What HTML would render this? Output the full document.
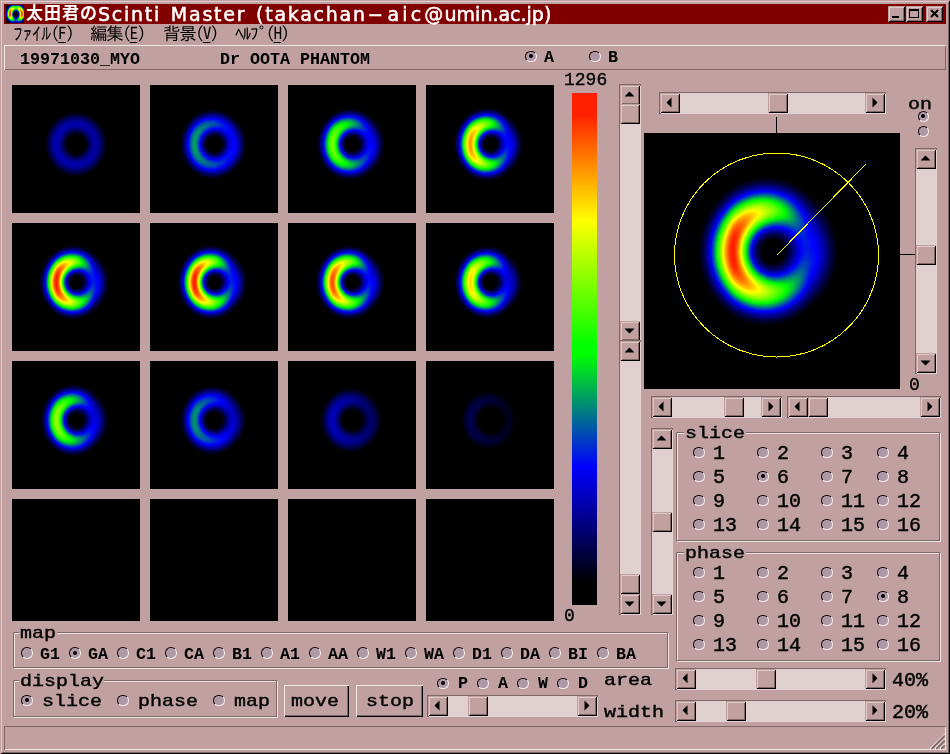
<!DOCTYPE html><html><head><meta charset="utf-8"><title>Scinti Master</title><style>
*{box-sizing:border-box;margin:0;padding:0}
html,body{width:950px;height:754px;overflow:hidden;background:#c0a0a0}
body{position:relative;font-family:"Liberation Mono",monospace;color:#000}
.a{position:absolute}
.t16{position:absolute;font:bold 16.67px/20px "Liberation Mono",monospace;white-space:pre}
.t20{position:absolute;height:24px;font:20px/24px "Liberation Mono",monospace;white-space:pre;-webkit-text-stroke:0.4px #000}
.lc{transform:scaleY(.8);transform-origin:0 100%;-webkit-text-stroke:0.45px #000}
.t18{position:absolute;font:18px/22px "Liberation Mono",monospace;white-space:pre;-webkit-text-stroke:0.35px #000}
.btn{position:absolute;background:#c0a0a0;box-shadow:inset 1px 1px 0 #c0a0a0,inset -1px -1px 0 #000,inset 2px 2px 0 #dec8c8,inset -2px -2px 0 #806868}
.pb{position:absolute;background:#c0a0a0;box-shadow:inset 1px 1px 0 #efe3e3,inset -1px -1px 0 #000,inset -2px -2px 0 #806868}
.sb{position:absolute;background:#e0d0d0;box-shadow:-1px -1px 0 #806868,1px 1px 0 #e4d4d4,-1px 1px 0 #806868,1px -1px 0 #806868}
.grp{position:absolute;border:1px solid #806868;box-shadow:1px 1px 0 #efe3e3,inset 1px 1px 0 #efe3e3}
.cut{position:absolute;background:#c0a0a0;height:3px}
.rd{position:absolute;width:11.6px;height:11.6px;border-radius:50%;background:#b098a8;border:1.3px solid;border-color:#100808 #f4ecec #f4ecec #100808}
.rd.on::after{content:"";position:absolute;left:2.5px;top:2.5px;width:4px;height:4px;border-radius:50%;background:#000}
.rs{width:11px;height:11px}
.rs.on::after{left:2.3px;top:2.3px}
.menu{position:absolute;top:23.5px;font:17.5px/19px "IPAGothic","Noto Sans CJK JP",sans-serif;white-space:pre;letter-spacing:-1.3px}
.menu u{text-underline-offset:2px}
.nar{display:inline-block;transform:scaleX(0.58);transform-origin:0 50%;-webkit-text-stroke:0.3px #000}
</style></head><body><div id="w" style="position:absolute;left:0;top:0;width:950px;height:754px;will-change:transform">
<div class="a" style="left:0px;top:0px;width:950px;height:754px;box-shadow:inset 1px 1px 0 #c0a0a0,inset -1px -1px 0 #000,inset 2px 2px 0 #e0cccc,inset -2px -2px 0 #806868"></div>
<div class="a" style="left:4px;top:4px;width:942px;height:20px;background:#800000"></div>
<div class="a" id="title" style="left:26px;top:3px;height:21px;color:#fff;font:19px/21px 'DejaVu Sans','Noto Sans CJK JP',sans-serif;white-space:pre;letter-spacing:1.75px;word-spacing:2px;-webkit-text-stroke:0.5px #fff"><span style="font:bold 17px/21px 'Noto Sans CJK JP',sans-serif;letter-spacing:1px;-webkit-text-stroke:0;position:relative;top:-2px">太田君の</span>Scinti Master (takachan<span style="display:inline-block;transform:scaleX(2.2);margin:0 6px">-</span><span style="letter-spacing:3.2px">aic@</span><span style="letter-spacing:0;margin-left:-2px">umin.ac.jp)</span></div>
<div class="btn" style="left:888px;top:6px;width:17px;height:16px;"></div>
<div class="a" style="left:892px;top:16px;width:7px;height:2px;background:#000"></div>
<div class="btn" style="left:906px;top:6px;width:17px;height:16px;"></div>
<div class="a" style="left:909px;top:9px;width:10px;height:9px;border:1px solid #000;border-top-width:2px"></div>
<div class="btn" style="left:926px;top:6px;width:17px;height:16px;"></div>
<svg class="a" style="left:930px;top:9px" width="9" height="9" viewBox="0 0 9 9"><path d="M1 1L8 8M8 1L1 8" stroke="#000" stroke-width="2"/></svg>
<div class="menu" style="left:13px"><span class="nar">ファイル</span><span style="margin-left:-27px">(<u>F</u>)</span></div>
<div class="menu" style="left:90px">編集(<u>E</u>)</div>
<div class="menu" style="left:163px">背景(<u>V</u>)</div>
<div class="menu" style="left:235px">ﾍﾙﾌﾟ(<u>H</u>)</div>
<div class="a" style="left:4px;top:45px;width:942px;height:25px;box-shadow:inset 1px 1px 0 #efe3e3,inset -1px -1px 0 #806868"></div>
<div class="t16" style="left:20px;top:50.0px">19971030_MYO</div>
<div class="t16" style="left:220px;top:50.0px">Dr OOTA PHANTOM</div>
<div class="rd on" style="left:525.2px;top:50.900000000000006px"></div>
<div class="rd" style="left:589.2px;top:50.900000000000006px"></div>
<div class="t16" style="left:544px;top:47.5px">A</div>
<div class="t16" style="left:608px;top:47.5px">B</div>
<svg class="a" style="left:0;top:0" width="950" height="754" viewBox="0 0 950 754"><defs><radialGradient id="rg" gradientUnits="userSpaceOnUse" cx="0" cy="0" r="100" gradientTransform="translate(128 118.5) scale(1 1.04)"><stop offset="0.00" stop-color="rgb(1,1,1)"/><stop offset="0.02" stop-color="rgb(2,2,2)"/><stop offset="0.04" stop-color="rgb(4,4,4)"/><stop offset="0.06" stop-color="rgb(7,7,7)"/><stop offset="0.08" stop-color="rgb(10,10,10)"/><stop offset="0.10" stop-color="rgb(15,15,15)"/><stop offset="0.12" stop-color="rgb(22,22,22)"/><stop offset="0.14" stop-color="rgb(32,32,32)"/><stop offset="0.16" stop-color="rgb(44,44,44)"/><stop offset="0.18" stop-color="rgb(59,59,59)"/><stop offset="0.20" stop-color="rgb(78,78,78)"/><stop offset="0.22" stop-color="rgb(99,99,99)"/><stop offset="0.24" stop-color="rgb(123,123,123)"/><stop offset="0.26" stop-color="rgb(148,148,148)"/><stop offset="0.28" stop-color="rgb(174,174,174)"/><stop offset="0.30" stop-color="rgb(198,198,198)"/><stop offset="0.32" stop-color="rgb(220,220,220)"/><stop offset="0.34" stop-color="rgb(238,238,238)"/><stop offset="0.36" stop-color="rgb(250,250,250)"/><stop offset="0.38" stop-color="rgb(255,255,255)"/><stop offset="0.40" stop-color="rgb(254,254,254)"/><stop offset="0.42" stop-color="rgb(247,247,247)"/><stop offset="0.44" stop-color="rgb(237,237,237)"/><stop offset="0.46" stop-color="rgb(222,222,222)"/><stop offset="0.48" stop-color="rgb(204,204,204)"/><stop offset="0.50" stop-color="rgb(184,184,184)"/><stop offset="0.52" stop-color="rgb(162,162,162)"/><stop offset="0.54" stop-color="rgb(141,141,141)"/><stop offset="0.56" stop-color="rgb(119,119,119)"/><stop offset="0.58" stop-color="rgb(99,99,99)"/><stop offset="0.60" stop-color="rgb(81,81,81)"/><stop offset="0.62" stop-color="rgb(65,65,65)"/><stop offset="0.64" stop-color="rgb(51,51,51)"/><stop offset="0.66" stop-color="rgb(39,39,39)"/><stop offset="0.68" stop-color="rgb(29,29,29)"/><stop offset="0.70" stop-color="rgb(22,22,22)"/><stop offset="0.72" stop-color="rgb(16,16,16)"/><stop offset="0.74" stop-color="rgb(11,11,11)"/><stop offset="0.76" stop-color="rgb(8,8,8)"/><stop offset="0.78" stop-color="rgb(5,5,5)"/><stop offset="0.80" stop-color="rgb(4,4,4)"/><stop offset="0.82" stop-color="rgb(2,2,2)"/><stop offset="0.84" stop-color="rgb(2,2,2)"/><stop offset="0.86" stop-color="rgb(1,1,1)"/><stop offset="0.88" stop-color="rgb(1,1,1)"/><stop offset="0.90" stop-color="rgb(0,0,0)"/><stop offset="0.92" stop-color="rgb(0,0,0)"/><stop offset="0.94" stop-color="rgb(0,0,0)"/><stop offset="0.96" stop-color="rgb(0,0,0)"/><stop offset="0.98" stop-color="rgb(0,0,0)"/><stop offset="1.00" stop-color="rgb(0,0,0)"/></radialGradient><linearGradient id="lg" gradientUnits="userSpaceOnUse" x1="89.0" y1="118" x2="166.0" y2="118"><stop offset="0" stop-color="#000" stop-opacity="0.03"/><stop offset="0.5" stop-color="#000" stop-opacity="0.36"/><stop offset="1" stop-color="#000" stop-opacity="0.70"/></linearGradient><radialGradient id="dk" gradientUnits="userSpaceOnUse" cx="160" cy="96" r="36"><stop offset="0" stop-color="#000" stop-opacity="0.14"/><stop offset="1" stop-color="#000" stop-opacity="0"/></radialGradient><filter id="cm" color-interpolation-filters="sRGB" x="0" y="0" width="1" height="1"><feComponentTransfer><feFuncR type="table" tableValues="0 0 0 0 0 0 0 0 0 0 0 0 0 0 0 0 0 0 0 0 0 0 0 0 0 0 0 0 0 0 0 0 0 0 0 0 0 0 0 0 0 0 0 0 0 0 0 0 0 0 0 0.04 0.08 0.12 0.16 0.2 0.24 0.28 0.32 0.36 0.4 0.44 0.48 0.52 0.56 0.6 0.64 0.68 0.72 0.76 0.8 0.84 0.88 0.92 0.96 1 1 1 1 1 1 1 1 1 1 1 1 1 1 1 1 1 1 1 1 1 1 1 1 1 1"/><feFuncG type="table" tableValues="0 0 0 0 0 0 0 0 0 0 0 0 0 0 0 0 0 0 0 0 0 0 0 0 0 0 0 0 0.043 0.087 0.13 0.174 0.217 0.261 0.304 0.348 0.391 0.435 0.478 0.522 0.565 0.609 0.652 0.696 0.739 0.783 0.826 0.87 0.913 0.957 1 1 1 1 1 1 1 1 1 1 1 1 1 1 1 1 1 1 1 1 1 1 1 1 1 1 0.958 0.916 0.874 0.832 0.79 0.748 0.706 0.664 0.622 0.58 0.538 0.495 0.453 0.411 0.369 0.327 0.285 0.243 0.201 0.159 0.125 0.125 0.125 0.125 0.125"/><feFuncB type="table" tableValues="0 0 0 0 0 0.031 0.075 0.119 0.163 0.207 0.251 0.295 0.339 0.383 0.427 0.471 0.515 0.559 0.604 0.648 0.692 0.736 0.78 0.824 0.868 0.912 0.956 1 0.957 0.913 0.87 0.826 0.783 0.739 0.696 0.652 0.609 0.565 0.522 0.478 0.435 0.391 0.348 0.304 0.261 0.217 0.174 0.13 0.087 0.043 0 0 0 0 0 0 0 0 0 0 0 0 0 0 0 0 0 0 0 0 0 0 0 0 0 0 0 0 0 0 0 0 0 0 0 0 0 0 0 0 0 0 0 0 0 0 0 0 0 0 0"/></feComponentTransfer></filter><radialGradient id="ig" gradientUnits="userSpaceOnUse" cx="0" cy="0" r="12" gradientTransform="translate(15.9 14.3) scale(1 1.12)"><stop offset="0.00" stop-color="rgb(1,1,1)"/><stop offset="0.05" stop-color="rgb(3,3,3)"/><stop offset="0.10" stop-color="rgb(9,9,9)"/><stop offset="0.15" stop-color="rgb(21,21,21)"/><stop offset="0.20" stop-color="rgb(43,43,43)"/><stop offset="0.25" stop-color="rgb(79,79,79)"/><stop offset="0.30" stop-color="rgb(128,128,128)"/><stop offset="0.35" stop-color="rgb(182,182,182)"/><stop offset="0.40" stop-color="rgb(228,228,228)"/><stop offset="0.45" stop-color="rgb(253,253,253)"/><stop offset="0.50" stop-color="rgb(251,251,251)"/><stop offset="0.55" stop-color="rgb(230,230,230)"/><stop offset="0.60" stop-color="rgb(196,196,196)"/><stop offset="0.65" stop-color="rgb(155,155,155)"/><stop offset="0.70" stop-color="rgb(113,113,113)"/><stop offset="0.75" stop-color="rgb(77,77,77)"/><stop offset="0.80" stop-color="rgb(49,49,49)"/><stop offset="0.85" stop-color="rgb(29,29,29)"/><stop offset="0.90" stop-color="rgb(16,16,16)"/><stop offset="0.95" stop-color="rgb(8,8,8)"/><stop offset="1.00" stop-color="rgb(4,4,4)"/></radialGradient><linearGradient id="ih" gradientUnits="userSpaceOnUse" x1="9.5" y1="0" x2="22.3" y2="0"><stop offset="0" stop-color="#000" stop-opacity="0"/><stop offset="0.5" stop-color="#000" stop-opacity="0.46"/><stop offset="1" stop-color="#000" stop-opacity="0"/></linearGradient><linearGradient id="iv" gradientUnits="userSpaceOnUse" x1="0" y1="16" x2="0" y2="23"><stop offset="0" stop-color="#000" stop-opacity="0"/><stop offset="1" stop-color="#000" stop-opacity="0.6"/></linearGradient></defs><g filter="url(#cm)"><rect x="6" y="5" width="18" height="18" fill="#000"/><rect x="6" y="5" width="18" height="18" fill="url(#ig)"/><rect x="6" y="5" width="18" height="18" fill="url(#ih)"/><rect x="6" y="5" width="18" height="18" fill="url(#iv)"/></g><g transform="translate(12 85) scale(0.5)" filter="url(#cm)"><rect width="256" height="256" fill="#000"/><rect width="256" height="256" fill="url(#rg)"/><rect width="256" height="256" fill="url(#lg)" opacity="0.1"/><rect width="256" height="256" fill="url(#dk)" opacity="0.1"/><rect width="256" height="256" fill="#000" opacity="0.80"/></g><g transform="translate(150 85) scale(0.5)" filter="url(#cm)"><rect width="256" height="256" fill="#000"/><rect width="256" height="256" fill="url(#rg)"/><rect width="256" height="256" fill="url(#lg)" opacity="0.5"/><rect width="256" height="256" fill="url(#dk)" opacity="0.5"/><rect width="256" height="256" fill="#000" opacity="0.58"/></g><g transform="translate(288 85) scale(0.5)" filter="url(#cm)"><rect width="256" height="256" fill="#000"/><rect width="256" height="256" fill="url(#rg)"/><rect width="256" height="256" fill="url(#lg)" opacity="0.8"/><rect width="256" height="256" fill="url(#dk)" opacity="0.8"/><rect width="256" height="256" fill="#000" opacity="0.37"/></g><g transform="translate(426 85) scale(0.5)" filter="url(#cm)"><rect width="256" height="256" fill="#000"/><rect width="256" height="256" fill="url(#rg)"/><rect width="256" height="256" fill="url(#lg)" opacity="0.97"/><rect width="256" height="256" fill="url(#dk)" opacity="0.97"/><rect width="256" height="256" fill="#000" opacity="0.12"/></g><g transform="translate(12 223) scale(0.5)" filter="url(#cm)"><rect width="256" height="256" fill="#000"/><rect width="256" height="256" fill="url(#rg)"/><rect width="256" height="256" fill="url(#lg)" opacity="1"/><rect width="256" height="256" fill="url(#dk)" opacity="1"/></g><g transform="translate(150 223) scale(0.5)" filter="url(#cm)"><rect width="256" height="256" fill="#000"/><rect width="256" height="256" fill="url(#rg)"/><rect width="256" height="256" fill="url(#lg)" opacity="1"/><rect width="256" height="256" fill="url(#dk)" opacity="1"/></g><g transform="translate(288 223) scale(0.5)" filter="url(#cm)"><rect width="256" height="256" fill="#000"/><rect width="256" height="256" fill="url(#rg)"/><rect width="256" height="256" fill="url(#lg)" opacity="1"/><rect width="256" height="256" fill="url(#dk)" opacity="1"/><rect width="256" height="256" fill="#000" opacity="0.05"/></g><g transform="translate(426 223) scale(0.5)" filter="url(#cm)"><rect width="256" height="256" fill="#000"/><rect width="256" height="256" fill="url(#rg)"/><rect width="256" height="256" fill="url(#lg)" opacity="1"/><rect width="256" height="256" fill="url(#dk)" opacity="1"/><rect width="256" height="256" fill="#000" opacity="0.18"/></g><g transform="translate(12 361) scale(0.5)" filter="url(#cm)"><rect width="256" height="256" fill="#000"/><rect width="256" height="256" fill="url(#rg)"/><rect width="256" height="256" fill="url(#lg)" opacity="0.9"/><rect width="256" height="256" fill="url(#dk)" opacity="0.9"/><rect width="256" height="256" fill="#000" opacity="0.33"/></g><g transform="translate(150 361) scale(0.5)" filter="url(#cm)"><rect width="256" height="256" fill="#000"/><rect width="256" height="256" fill="url(#rg)"/><rect width="256" height="256" fill="url(#lg)" opacity="0.65"/><rect width="256" height="256" fill="url(#dk)" opacity="0.65"/><rect width="256" height="256" fill="#000" opacity="0.59"/></g><g transform="translate(288 361) scale(0.5)" filter="url(#cm)"><rect width="256" height="256" fill="#000"/><rect width="256" height="256" fill="url(#rg)"/><rect width="256" height="256" fill="url(#lg)" opacity="0.5"/><rect width="256" height="256" fill="url(#dk)" opacity="0.5"/><rect width="256" height="256" fill="#000" opacity="0.79"/></g><g transform="translate(426 361) scale(0.5)" filter="url(#cm)"><rect width="256" height="256" fill="#000"/><rect width="256" height="256" fill="url(#rg)"/><rect width="256" height="256" fill="url(#lg)" opacity="0.5"/><rect width="256" height="256" fill="url(#dk)" opacity="0.5"/><rect width="256" height="256" fill="#000" opacity="0.89"/></g><rect x="12" y="499" width="128" height="122" fill="#000"/><rect x="150" y="499" width="128" height="122" fill="#000"/><rect x="288" y="499" width="128" height="122" fill="#000"/><rect x="426" y="499" width="128" height="122" fill="#000"/><g transform="translate(644 133)" filter="url(#cm)"><rect width="256" height="256" fill="#000"/><rect width="256" height="256" fill="url(#rg)"/><rect width="256" height="256" fill="url(#lg)" opacity="1"/><rect width="256" height="256" fill="url(#dk)" opacity="1"/></g><circle cx="776.5" cy="255" r="102" fill="none" stroke="#ffff00" stroke-width="1" shape-rendering="crispEdges"/><path d="M776.5 255.5L866 164" stroke="#ffff00" stroke-width="1" shape-rendering="crispEdges"/><path d="M776.5 117V133M900 254.5H916" stroke="#000" stroke-width="1"/></svg>
<div class="a" style="left:572px;top:93px;width:25px;height:512px;background:linear-gradient(to bottom,#ff2000 0%,#ff2000 4.2%,#ffff00 25%,#00ff00 49.5%,#00ff00 51%,#0000ff 73%,#000 95.7%,#000 100%)"></div>
<div class="t18" style="left:564px;top:69.1px">1296</div>
<div class="t18" style="left:564px;top:604.8px">0</div>
<div class="t18" style="left:909px;top:374.0px">0</div>
<div class="sb" style="left:620px;top:85px;width:20px;height:256px;"></div>
<div class="btn" style="left:620px;top:85px;width:20px;height:20px;"></div>
<div class="btn" style="left:620px;top:321px;width:20px;height:20px;"></div>
<div class="btn" style="left:620px;top:104px;width:20px;height:20px;"></div>
<div class="sb" style="left:620px;top:341px;width:20px;height:273px;"></div>
<div class="btn" style="left:620px;top:341px;width:20px;height:20px;"></div>
<div class="btn" style="left:620px;top:594px;width:20px;height:20px;"></div>
<div class="btn" style="left:620px;top:574px;width:20px;height:20px;"></div>
<div class="sb" style="left:660px;top:93px;width:225px;height:20px;"></div>
<div class="btn" style="left:660px;top:93px;width:20px;height:20px;"></div>
<div class="btn" style="left:865px;top:93px;width:20px;height:20px;"></div>
<div class="btn" style="left:768px;top:93px;width:20px;height:20px;"></div>
<div class="sb" style="left:916px;top:149px;width:20px;height:224px;"></div>
<div class="btn" style="left:916px;top:149px;width:20px;height:20px;"></div>
<div class="btn" style="left:916px;top:353px;width:20px;height:20px;"></div>
<div class="btn" style="left:916px;top:245px;width:20px;height:20px;"></div>
<div class="sb" style="left:652px;top:397px;width:129px;height:20px;"></div>
<div class="btn" style="left:652px;top:397px;width:20px;height:20px;"></div>
<div class="btn" style="left:761px;top:397px;width:20px;height:20px;"></div>
<div class="btn" style="left:724px;top:397px;width:20px;height:20px;"></div>
<div class="sb" style="left:788px;top:397px;width:152px;height:20px;"></div>
<div class="btn" style="left:788px;top:397px;width:20px;height:20px;"></div>
<div class="btn" style="left:920px;top:397px;width:20px;height:20px;"></div>
<div class="btn" style="left:808px;top:397px;width:20px;height:20px;"></div>
<div class="sb" style="left:652px;top:429px;width:20px;height:185px;"></div>
<div class="btn" style="left:652px;top:429px;width:20px;height:20px;"></div>
<div class="btn" style="left:652px;top:594px;width:20px;height:20px;"></div>
<div class="btn" style="left:652px;top:512px;width:20px;height:20px;"></div>
<div class="sb" style="left:428px;top:696px;width:169px;height:20px;"></div>
<div class="btn" style="left:428px;top:696px;width:20px;height:20px;"></div>
<div class="btn" style="left:577px;top:696px;width:20px;height:20px;"></div>
<div class="btn" style="left:468px;top:696px;width:20px;height:20px;"></div>
<div class="sb" style="left:676px;top:669px;width:209px;height:19.5px;"></div>
<div class="btn" style="left:676px;top:669px;width:20px;height:19.5px;"></div>
<div class="btn" style="left:865px;top:669px;width:20px;height:19.5px;"></div>
<div class="btn" style="left:756px;top:669px;width:20px;height:19.5px;"></div>
<div class="sb" style="left:676px;top:701px;width:209px;height:19.5px;"></div>
<div class="btn" style="left:676px;top:701px;width:20px;height:19.5px;"></div>
<div class="btn" style="left:865px;top:701px;width:20px;height:19.5px;"></div>
<div class="btn" style="left:726px;top:701px;width:20px;height:19.5px;"></div>
<svg class="a" style="left:0;top:0" width="950" height="754"><path d="M629.5 91.5L624.5 96.5H634.5ZM629.5 333.5L624.5 328.5H634.5ZM629.5 347.5L624.5 352.5H634.5ZM629.5 606.5L624.5 601.5H634.5ZM666.5 102.5L671.5 97.5V107.5ZM877.5 102.5L872.5 97.5V107.5ZM925.5 155.5L920.5 160.5H930.5ZM925.5 365.5L920.5 360.5H930.5ZM658.5 406.5L663.5 401.5V411.5ZM773.5 406.5L768.5 401.5V411.5ZM794.5 406.5L799.5 401.5V411.5ZM932.5 406.5L927.5 401.5V411.5ZM661.5 435.5L656.5 440.5H666.5ZM661.5 606.5L656.5 601.5H666.5ZM434.5 705.5L439.5 700.5V710.5ZM589.5 705.5L584.5 700.5V710.5ZM682.5 678.25L687.5 673.25V683.25ZM877.5 678.25L872.5 673.25V683.25ZM682.5 710.25L687.5 705.25V715.25ZM877.5 710.25L872.5 705.25V715.25Z" fill="#000"/></svg>
<div class="t20 lc" style="left:908px;top:90.8px;">on</div>
<div class="rd rs on" style="left:917.5px;top:111.2px"></div>
<div class="rd rs" style="left:917.5px;top:126.19999999999999px"></div>
<div class="grp" style="left:676px;top:432px;width:264px;height:109px;"></div>
<div class="cut" style="left:684px;top:431px;width:62px"></div>
<div class="t20 lc" style="left:685px;top:419.7px;">slice</div>
<div class="grp" style="left:676px;top:552px;width:264px;height:109px;"></div>
<div class="cut" style="left:684px;top:551px;width:62px"></div>
<div class="t20 lc" style="left:685px;top:539.7px;">phase</div>
<div class="rd" style="left:693.2px;top:446.9px"></div>
<div class="t20" style="left:713px;top:442.2px;">1</div>
<div class="rd" style="left:757.2px;top:446.9px"></div>
<div class="t20" style="left:777px;top:442.2px;">2</div>
<div class="rd" style="left:821.2px;top:446.9px"></div>
<div class="t20" style="left:841px;top:442.2px;">3</div>
<div class="rd" style="left:877.2px;top:446.9px"></div>
<div class="t20" style="left:897px;top:442.2px;">4</div>
<div class="rd" style="left:693.2px;top:470.9px"></div>
<div class="t20" style="left:713px;top:466.2px;">5</div>
<div class="rd on" style="left:757.2px;top:470.9px"></div>
<div class="t20" style="left:777px;top:466.2px;">6</div>
<div class="rd" style="left:821.2px;top:470.9px"></div>
<div class="t20" style="left:841px;top:466.2px;">7</div>
<div class="rd" style="left:877.2px;top:470.9px"></div>
<div class="t20" style="left:897px;top:466.2px;">8</div>
<div class="rd" style="left:693.2px;top:494.9px"></div>
<div class="t20" style="left:713px;top:490.2px;">9</div>
<div class="rd" style="left:757.2px;top:494.9px"></div>
<div class="t20" style="left:777px;top:490.2px;">10</div>
<div class="rd" style="left:821.2px;top:494.9px"></div>
<div class="t20" style="left:841px;top:490.2px;">11</div>
<div class="rd" style="left:877.2px;top:494.9px"></div>
<div class="t20" style="left:897px;top:490.2px;">12</div>
<div class="rd" style="left:693.2px;top:518.9000000000001px"></div>
<div class="t20" style="left:713px;top:514.2px;">13</div>
<div class="rd" style="left:757.2px;top:518.9000000000001px"></div>
<div class="t20" style="left:777px;top:514.2px;">14</div>
<div class="rd" style="left:821.2px;top:518.9000000000001px"></div>
<div class="t20" style="left:841px;top:514.2px;">15</div>
<div class="rd" style="left:877.2px;top:518.9000000000001px"></div>
<div class="t20" style="left:897px;top:514.2px;">16</div>
<div class="rd" style="left:693.2px;top:566.9000000000001px"></div>
<div class="t20" style="left:713px;top:562.2px;">1</div>
<div class="rd" style="left:757.2px;top:566.9000000000001px"></div>
<div class="t20" style="left:777px;top:562.2px;">2</div>
<div class="rd" style="left:821.2px;top:566.9000000000001px"></div>
<div class="t20" style="left:841px;top:562.2px;">3</div>
<div class="rd" style="left:877.2px;top:566.9000000000001px"></div>
<div class="t20" style="left:897px;top:562.2px;">4</div>
<div class="rd" style="left:693.2px;top:590.9000000000001px"></div>
<div class="t20" style="left:713px;top:586.2px;">5</div>
<div class="rd" style="left:757.2px;top:590.9000000000001px"></div>
<div class="t20" style="left:777px;top:586.2px;">6</div>
<div class="rd" style="left:821.2px;top:590.9000000000001px"></div>
<div class="t20" style="left:841px;top:586.2px;">7</div>
<div class="rd on" style="left:877.2px;top:590.9000000000001px"></div>
<div class="t20" style="left:897px;top:586.2px;">8</div>
<div class="rd" style="left:693.2px;top:614.9000000000001px"></div>
<div class="t20" style="left:713px;top:610.2px;">9</div>
<div class="rd" style="left:757.2px;top:614.9000000000001px"></div>
<div class="t20" style="left:777px;top:610.2px;">10</div>
<div class="rd" style="left:821.2px;top:614.9000000000001px"></div>
<div class="t20" style="left:841px;top:610.2px;">11</div>
<div class="rd" style="left:877.2px;top:614.9000000000001px"></div>
<div class="t20" style="left:897px;top:610.2px;">12</div>
<div class="rd" style="left:693.2px;top:638.9000000000001px"></div>
<div class="t20" style="left:713px;top:634.2px;">13</div>
<div class="rd" style="left:757.2px;top:638.9000000000001px"></div>
<div class="t20" style="left:777px;top:634.2px;">14</div>
<div class="rd" style="left:821.2px;top:638.9000000000001px"></div>
<div class="t20" style="left:841px;top:634.2px;">15</div>
<div class="rd" style="left:877.2px;top:638.9000000000001px"></div>
<div class="t20" style="left:897px;top:634.2px;">16</div>
<div class="grp" style="left:13px;top:632px;width:655px;height:36px;"></div>
<div class="cut" style="left:19px;top:631px;width:38px"></div>
<div class="t20 lc" style="left:20px;top:619.7px;">map</div>
<div class="rd" style="left:21.2px;top:647.4000000000001px"></div>
<div class="t16" style="left:40px;top:644.6px">G1</div>
<div class="rd on" style="left:69.2px;top:647.4000000000001px"></div>
<div class="t16" style="left:88px;top:644.6px">GA</div>
<div class="rd" style="left:117.2px;top:647.4000000000001px"></div>
<div class="t16" style="left:136px;top:644.6px">C1</div>
<div class="rd" style="left:165.2px;top:647.4000000000001px"></div>
<div class="t16" style="left:184px;top:644.6px">CA</div>
<div class="rd" style="left:213.2px;top:647.4000000000001px"></div>
<div class="t16" style="left:232px;top:644.6px">B1</div>
<div class="rd" style="left:261.2px;top:647.4000000000001px"></div>
<div class="t16" style="left:280px;top:644.6px">A1</div>
<div class="rd" style="left:309.2px;top:647.4000000000001px"></div>
<div class="t16" style="left:328px;top:644.6px">AA</div>
<div class="rd" style="left:357.2px;top:647.4000000000001px"></div>
<div class="t16" style="left:376px;top:644.6px">W1</div>
<div class="rd" style="left:405.2px;top:647.4000000000001px"></div>
<div class="t16" style="left:424px;top:644.6px">WA</div>
<div class="rd" style="left:453.2px;top:647.4000000000001px"></div>
<div class="t16" style="left:472px;top:644.6px">D1</div>
<div class="rd" style="left:501.2px;top:647.4000000000001px"></div>
<div class="t16" style="left:520px;top:644.6px">DA</div>
<div class="rd" style="left:549.2px;top:647.4000000000001px"></div>
<div class="t16" style="left:568px;top:644.6px">BI</div>
<div class="rd" style="left:597.2px;top:647.4000000000001px"></div>
<div class="t16" style="left:616px;top:644.6px">BA</div>
<div class="grp" style="left:13px;top:680px;width:264px;height:37px;"></div>
<div class="cut" style="left:19px;top:679px;width:85px"></div>
<div class="t20 lc" style="left:20px;top:667.7px;">display</div>
<div class="rd on" style="left:21.2px;top:694.9000000000001px"></div>
<div class="t20 lc" style="left:42px;top:687.7px;">slice</div>
<div class="rd" style="left:117.2px;top:694.9000000000001px"></div>
<div class="t20 lc" style="left:138px;top:687.7px;">phase</div>
<div class="rd" style="left:213.2px;top:694.9000000000001px"></div>
<div class="t20 lc" style="left:234px;top:687.7px;">map</div>
<div class="pb" style="left:284px;top:685px;width:65px;height:32px;"></div>
<div class="t20 lc" style="left:291px;top:687.6px;">move</div>
<div class="pb" style="left:356px;top:685px;width:67px;height:32px;"></div>
<div class="t20 lc" style="left:366px;top:687.6px;">stop</div>
<div class="rd on" style="left:437.2px;top:677.9000000000001px"></div>
<div class="t16" style="left:458px;top:674.0px">P</div>
<div class="rd" style="left:477.2px;top:677.9000000000001px"></div>
<div class="t16" style="left:498px;top:674.0px">A</div>
<div class="rd" style="left:517.2px;top:677.9000000000001px"></div>
<div class="t16" style="left:538px;top:674.0px">W</div>
<div class="rd" style="left:557.2px;top:677.9000000000001px"></div>
<div class="t16" style="left:578px;top:674.0px">D</div>
<div class="t20 lc" style="left:604px;top:667.2px;">area</div>
<div class="t20 lc" style="left:604px;top:698.7px;">width</div>
<div class="t20" style="left:892px;top:669.0px;">40%</div>
<div class="t20" style="left:892px;top:701.0px;">20%</div>
<div class="a" style="left:4px;top:726px;width:942px;height:24px;box-shadow:inset 1px 1px 0 #806868,inset -1px -1px 0 #efe3e3"></div>
<svg class="a" style="left:929px;top:733px" width="17" height="17" viewBox="0 0 14 14"><path d="M13 1L1 13M13 5L5 13M13 9L9 13" stroke="#fff" stroke-width="1"/><path d="M13 2L2 13M13 6L6 13M13 10L10 13" stroke="#806868" stroke-width="1.5"/></svg>
</div></body></html>
